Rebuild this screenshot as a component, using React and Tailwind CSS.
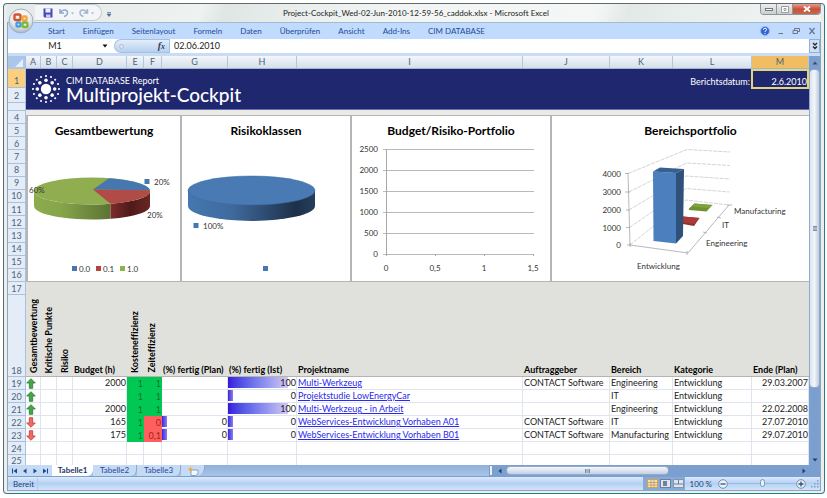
import React from "react";

const TABS = ["Start", "Einfügen", "Seitenlayout", "Formeln", "Daten", "Überprüfen", "Ansicht", "Add-Ins", "CIM DATABASE"];
const COLS = "grid grid-cols-[15px_16px_16px_54px_17px_18px_66px_69px_1fr_87px_63px_79px_57px]";

const PROJECTS = [
  { up: true, budget: "2000", cost: "1", time: "1", plan: "", actual: "100", name: "Multi-Werkzeug", client: "CONTACT Software", area: "Engineering", end: "29.03.2007" },
  { up: true, budget: "", cost: "1", time: "1", plan: "", actual: "0", name: "Projektstudie LowEnergyCar", client: "", area: "IT", end: "" },
  { up: true, budget: "2000", cost: "1", time: "1", plan: "", actual: "100", name: "Multi-Werkzeug - in Arbeit", client: "", area: "Engineering", end: "22.02.2008" },
  { up: false, budget: "165", cost: "1", time: "0", plan: "0", actual: "0", name: "WebServices-Entwicklung Vorhaben A01", client: "CONTACT Software", area: "IT", end: "27.07.2010" },
  { up: false, budget: "175", cost: "1", time: "0,1", plan: "0", actual: "0", name: "WebServices-Entwicklung Vorhaben B01", client: "CONTACT Software", area: "Manufacturing", end: "29.07.2010" },
];

function OfficeButton() {
  return (
    <button aria-label="Office" className="absolute left-1 top-1 z-10 h-[26px] w-[26px]">
      <svg viewBox="0 0 26 26" className="h-full w-full">
        <defs>
          <radialGradient id="orb" cx="50%" cy="30%" r="75%">
            <stop offset="0" stopColor="#ffffff" />
            <stop offset="0.6" stopColor="#e4e8ee" />
            <stop offset="1" stopColor="#9aa7b8" />
          </radialGradient>
        </defs>
        <circle cx="13" cy="13" r="12" fill="url(#orb)" stroke="#a4aebb" />
        <g fill="none" strokeWidth="2.4" strokeLinejoin="round">
          <rect x="6.5" y="6.5" width="6" height="5.5" rx="1.5" stroke="#d9532b" />
          <rect x="14.5" y="8.5" width="4" height="4" rx="1" stroke="#f0a63a" />
          <rect x="8.5" y="14.5" width="4" height="4" rx="1" stroke="#4a9fdb" />
          <rect x="14.5" y="14.5" width="5" height="4.5" rx="1.5" stroke="#7fb63c" />
        </g>
      </svg>
    </button>
  );
}

function TitleBar() {
  return (
    <header className="flex h-[18px] items-start bg-[linear-gradient(115deg,#e3e9e7_0%,#eef2f1_24%,#dfe6e4_27%,#eaefee_36%,#f2f5f4_50%,#f5f7f7_72%,#e2e9e7_76%,#e9efed_84%,#f1f4f3_100%)]">
      <div className="ml-7 flex h-[17px] w-[67px] items-center gap-1 rounded-r-full border border-l-0 border-[#c3cbd0] bg-[#f3f6f8] pl-2">
        <button aria-label="Speichern">
          <svg viewBox="0 0 10 10" className="h-[10px] w-[10px]">
            <path d="M0.5 0.5H9.5V9.5H1.5L0.5 8.5Z" fill="#4a49b8" />
            <rect x="2.5" y="0.5" width="5" height="4" fill="#eef0ff" />
            <rect x="3" y="6.5" width="4.5" height="3" fill="#c7cdf0" />
          </svg>
        </button>
        <button aria-label="Rückgängig" className="ml-[2px]">
          <svg viewBox="0 0 16 10" className="h-[10px] w-4">
            <path d="M1 1V5H5M1.5 4.5C3 1.5 8.5 1 8.5 4.5C8.5 6.500 7 8 5 8.500" fill="none" stroke="#93a7cb" strokeWidth="1.5" />
            <path d="M12 4.500h3l-1.500 1.700z" fill="#a0a8b0" />
          </svg>
        </button>
        <button aria-label="Wiederholen">
          <svg viewBox="0 0 16 10" className="h-[10px] w-4">
            <path d="M8.500 1V5H4.500M8 4.500C6.500 1.500 1 1 1 4.500C1 6.500 2.500 8 4.500 8.500" fill="none" stroke="#a3b4cf" strokeWidth="1.500" />
            <path d="M12 4.500h3l-1.500 1.700z" fill="#a0a8b0" />
          </svg>
        </button>
      </div>
      <button aria-label="Symbolleiste anpassen" className="ml-1 mt-2">
        <svg viewBox="0 0 6 5" className="h-[5px] w-[6px]"><path d="M1 0.500H5M1 2H5L3 4.500Z" stroke="#4d6d96" strokeWidth="0.700" fill="#4d6d96" /></svg>
      </button>
      <h1 className="flex-1 pr-10 pt-[2px] text-center text-[8px] leading-[14px] text-[#222]">
        Project-Cockpit_Wed-02-Jun-2010-12-59-56_caddok.xlsx - Microsoft Excel
      </h1>
      <div className="flex h-[11px] overflow-hidden rounded-b border border-t-0 border-[#8e9799]">
        <button aria-label="Minimieren" className="flex w-4 items-center justify-center border-r border-[#8e9799] bg-gradient-to-b from-[#eceeee] to-[#c9cfcf]">
          <span className="h-[3px] w-2 border border-[#777] bg-white" />
        </button>
        <button aria-label="Maximieren" className="flex w-4 items-center justify-center border-r border-[#8e9799] bg-gradient-to-b from-[#eceeee] to-[#c9cfcf]">
          <svg viewBox="0 0 8 7" className="h-[7px] w-2"><path d="M0.500 0.500H7.500V6.500H0.500ZM3 2.500H5V4.500H3Z" fill="#fff" stroke="#888" strokeWidth="0.800" /></svg>
        </button>
        <button aria-label="Schließen" className="flex w-[27px] items-center justify-center bg-gradient-to-b from-[#e0a091] via-[#c8503a] to-[#c9654c]">
          <svg viewBox="0 0 8 6" className="h-[6px] w-2"><path d="M1 0.500L7 5.500M7 0.500L1 5.500" stroke="#fff" strokeWidth="1.800" /></svg>
        </button>
      </div>
    </header>
  );
}

function Ribbon() {
  return (
    <nav className="flex h-[17px] items-center border-t border-[#a3b9cf] bg-[#c0dbfd] pl-10 text-[8px] text-[#1f4a97]">
      <div className="flex flex-1 gap-[18px]">
        {TABS.map((t) => <button key={t}>{t}</button>)}
      </div>
      <div className="flex items-center gap-2 pr-1">
        <button aria-label="Hilfe">
          <svg viewBox="0 0 10 10" className="h-[10px] w-[10px]">
            <circle cx="5" cy="5" r="4.500" fill="#2f64d4" stroke="#9db9ec" />
            <path d="M3.300 3.800Q3.500 2.200 5 2.200Q6.700 2.300 6.600 3.800Q6.300 4.800 5 5.300V6M5 7V8" stroke="#fff" fill="none" />
          </svg>
        </button>
        <button aria-label="Mappe minimieren"><svg viewBox="0 0 6 8" className="h-2 w-[6px]"><path d="M0.500 6.500H5" stroke="#68758a" strokeWidth="1.200" /></svg></button>
        <button aria-label="Mappe wiederherstellen"><svg viewBox="0 0 8 8" className="h-2 w-2"><path d="M2.500 3V1.500H7.500V4.500H6M1 3.500H5.500V6.500H1Z" fill="none" stroke="#68758a" /></svg></button>
        <button aria-label="Mappe schließen"><svg viewBox="0 0 8 8" className="h-2 w-2"><path d="M1.500 1L6.500 7M6.500 1L1.500 7" stroke="#68758a" strokeWidth="1.200" /></svg></button>
      </div>
    </nav>
  );
}

function FormulaBar() {
  return (
    <div className="flex h-[17px] border-b-[3px] border-[#c9dcf3] bg-white text-[9px] text-[#222]">
      <input aria-label="Namenfeld" defaultValue="M1" className="w-[94px] bg-white text-center outline-none" />
      <button aria-label="Namen" className="flex w-3 items-center">
        <svg viewBox="0 0 6 4" className="h-1 w-[6px]"><path d="M0.500 0.500H5.500L3 3.500Z" fill="#111" /></svg>
      </button>
      <div className="flex w-[55px] items-center justify-between rounded-l-full border border-r-0 border-[#a9c0dd] bg-gradient-to-b from-[#e3eefb] to-[#b7d0ef] px-1">
        <span className="h-[5px] w-[5px] rounded-full border border-[#b3bfce] bg-[#dde5ee]" />
        <button aria-label="Funktion einfügen" className="font-['Liberation_Serif',serif] text-[10px] font-bold italic leading-none text-[#33415c]">f<span className="text-[8px]">x</span></button>
      </div>
      <input aria-label="Bearbeitungsleiste" defaultValue="02.06.2010" className="min-w-0 flex-1 border-l border-[#a9c0dd] pl-1 outline-none" />
      <button aria-label="Bearbeitungsleiste erweitern" className="flex w-[11px] items-center justify-center border border-[#8fb0d8] bg-[#cfe0f5]">
        <svg viewBox="0 0 6 8" className="h-2 w-[6px]"><path d="M1 1L3 3L5 1M1 4.500L3 6.500L5 4.500" fill="none" stroke="#222" strokeWidth="1.300" /></svg>
      </button>
    </div>
  );
}

function RowHeaders() {
  const base = "flex items-center justify-center border-b border-[#a9c1dd]";
  return (
    <div className="flex w-[18px] flex-col border-r border-[#a9c1dd] bg-[#e3ecf7] text-[9px] leading-none text-[#4c6478]">
      <button aria-label="Alles markieren" className="flex h-[13px] items-end justify-end bg-[#abc6e8] p-[2px]">
        <svg viewBox="0 0 8 8" className="h-2 w-2"><path d="M8 0V8H0Z" fill="#e6eef9" /></svg>
      </button>
      <div className={base + " h-[19px] bg-[#fbcf7d] pt-1"}>1</div>
      <div className={base + " h-[15px]"}>2</div>
      <div className={base + " h-2"} />
      <div className={base + " h-[13px]"}>4</div>
      <div className="grid h-[158px] grid-rows-12">
        {[5, 6, 7, 8, 9, 10, 11, 12, 13, 14, 15, 16].map((n) => <div key={n} className={base}>{n}</div>)}
      </div>
      <div className={base + " h-[13px]"}>17</div>
      <div className="flex h-[82px] items-end justify-center border-b border-[#a9c1dd] pb-[1px]">18</div>
      {[19, 20, 21, 22, 23, 24].map((n) => <div key={n} className={base + " h-[13px]"}>{n}</div>)}
      <div className="flex h-[10px] items-center justify-center">25</div>
    </div>
  );
}

function Logo() {
  const ring = (count, radius, size) =>
    Array.from({ length: count }, (_, i) => {
      const a = (i * 2 * Math.PI) / count;
      return <circle key={count + "-" + i} cx={15 + radius * Math.cos(a)} cy={15 + radius * Math.sin(a)} r={size} />;
    });
  return (
    <svg viewBox="0 0 30 30" className="h-[30px] w-[30px] fill-white">
      <circle cx="15" cy="15" r="5.200" />
      {ring(8, 8.7, 1.8)}
      {ring(16, 13, 1.05)}
    </svg>
  );
}

function Banner() {
  return (
    <div className="flex h-[41px] border-b border-[#6b6fb0] bg-[#1f286f] text-white">
      <div className="ml-[5px] mt-[5px]"><Logo /></div>
      <div className="ml-[5px] flex-1 pt-[6px]">
        <div className="text-[9px] leading-[11px]">CIM DATABASE Report</div>
        <div className="text-[19px] font-medium leading-[18px]">Multiprojekt-Cockpit</div>
      </div>
      <div className="pr-[1px] pt-[7px] text-[9px] leading-[11px]">Berichtsdatum:</div>
      <div className="h-[20px] w-[58px] border-2 border-[#e3d57c] pt-[5px] text-right text-[9px] leading-[11px]">2.6.2010</div>
    </div>
  );
}

function Panel({ title, className, titleClass = "", children }) {
  return (
    <section className={"border-y border-l-2 border-[#b5b5b5] bg-white pt-[7px] " + className}>
      <h2 className={"text-center text-[12px] font-bold leading-4 text-black " + titleClass}>{title}</h2>
      {children}
    </section>
  );
}

function RatingChart() {
  return (
    <svg viewBox="28 139 153 142" className="mx-auto h-[142px] w-[153px] text-[8px]" fill="#333">
      <defs>
        <linearGradient id="g1"><stop offset="0" stopColor="#8dac4e" /><stop offset="0.350" stopColor="#86a54a" /><stop offset="1" stopColor="#5c7333" /></linearGradient>
        <linearGradient id="g2"><stop offset="0" stopColor="#7c2d2c" /><stop offset="0.500" stopColor="#4f1a1a" /><stop offset="1" stopColor="#6b2525" /></linearGradient>
      </defs>
      <path d="M34 191A58 13.500 0 0 0 110.500 203.800V218.800A58 13.500 0 0 1 34 206Z" fill="url(#g1)" />
      <path d="M110.500 203.800A58 13.500 0 0 0 150 191V205A58 13.500 0 0 1 110.500 218.800Z" fill="url(#g2)" />
      <ellipse cx="92" cy="191" rx="58" ry="13.500" fill="#90ae50" />
      <path d="M93 189.500L109 178.200A58 13.500 0 0 1 150 190.300Z" fill="#4677b0" />
      <path d="M93 189.500L150 190.300A58 13.500 0 0 1 110.500 203.800Z" fill="#b04b48" />
      <text x="29" y="193">60%</text>
      <rect x="144.500" y="179" width="5" height="5" fill="#4677b0" />
      <text x="154" y="185">20%</text>
      <text x="147" y="218">20%</text>
      <rect x="72" y="266" width="5" height="5" fill="#4677b0" /><text x="79" y="272">0.0</text>
      <rect x="96" y="266" width="5" height="5" fill="#b8403e" /><text x="103" y="272">0.1</text>
      <rect x="120" y="266" width="5" height="5" fill="#8fb04a" /><text x="127" y="272">1.0</text>
    </svg>
  );
}

function RiskChart() {
  return (
    <svg viewBox="183 139 167 142" className="mx-auto h-[142px] w-[167px] text-[8px]" fill="#333">
      <defs>
        <linearGradient id="b1"><stop offset="0" stopColor="#4677b0" /><stop offset="0.350" stopColor="#3f6a9d" /><stop offset="0.850" stopColor="#1d3048" /><stop offset="1" stopColor="#263e5c" /></linearGradient>
      </defs>
      <path d="M188 190.500V206A63.500 15 0 0 0 315 206V190.500Z" fill="url(#b1)" />
      <ellipse cx="251.500" cy="190.500" rx="63.500" ry="14.500" fill="#4a7ab3" stroke="#3b6aa5" strokeWidth="0.500" />
      <rect x="193.500" y="223" width="5" height="5" fill="#4677b0" />
      <text x="203" y="229">100%</text>
      <rect x="263" y="266" width="5" height="5" fill="#4677b0" />
    </svg>
  );
}

function BudgetChart() {
  const rows = [["2500", 149], ["2000", 170], ["1500", 191], ["1000", 212], ["500", 233], ["0", 254]];
  const ticks = [["0", 386], ["0,5", 435], ["1", 484], ["1,5", 533]];
  return (
    <svg viewBox="352 139 198 142" className="mx-auto h-[142px] w-[198px] text-[8px]" fill="#333">
      {rows.map(([label, y]) => (
        <g key={label}>
          <path d={`M383 ${y + 0.5}H534`} stroke="#b9b9b9" />
          <text x="378" y={y + 3} textAnchor="end">{label}</text>
        </g>
      ))}
      <path d="M386.500 149.500V256M435.500 254V256M484.500 254V256M533.500 254V256" stroke="#a8a8a8" />
      {ticks.map(([label, x]) => <text key={label} x={x} y="271" textAnchor="middle">{label}</text>)}
    </svg>
  );
}

function AreaChart() {
  const ys = [["4000", 173.5], ["3000", 191.5], ["2000", 210], ["1000", 227.5], ["0", 245]];
  return (
    <svg viewBox="552 139 277 142" className="h-[142px] w-[277px] max-w-none text-[8px]" fill="#333">
      <g fill="none" stroke="#c9c9c9" strokeWidth="0.800">
        <path d="M628 173.500L687 149.500L730 152M629 192L686.500 163L730 165.500M629 210L686 176L730 179M629.500 227.500L686 188.500L729.500 192M630 245L686 200L729 205" strokeDasharray="4 1" />
        <path d="M628 173.500L630 245L688 253L729 205M625 173.500H629M625 192H630M626 210H630M626 227.500H630M627 245H631M630 243V247M687 251V255M703 232L707 233M717 217L721 218M727 205H732" stroke="#a6a6a6" />
      </g>
      <path d="M683 216.500L699.500 218L694 226L683 224Z" fill="#8f2f2e" />
      <path d="M683 216.500L699.500 218L694 224L683 222.500Z" fill="#a93a38" />
      <path d="M689 208.500L694.500 203.500L712.500 205L706.500 211.500L689 210Z" fill="#6f9132" />
      <path d="M691 206.500L694.500 203.500L712.500 205L708.500 208Z" fill="#7fa33c" />
      <path d="M653 171.500L676 173V243.500L653.500 241Z" fill="#4b7fbe" />
      <path d="M653 171.500L660 167.500L684 169L676 173Z" fill="#375f90" />
      <path d="M676 173L684 169L683 236L676 243.500Z" fill="#2f5078" />
      {ys.map(([label, y]) => <text key={label} x="621" y={y + 3} textAnchor="end">{label}</text>)}
      <text x="734" y="214">Manufacturing</text>
      <text x="722" y="228">IT</text>
      <text x="706" y="246">Engineering</text>
      <text x="637" y="269">Entwicklung</text>
    </svg>
  );
}

function Arrow({ up }) {
  return (
    <svg viewBox="0 0 10 11" role="img" aria-label={up ? "gut" : "schlecht"} className={up ? "h-[11px] w-[10px]" : "h-[11px] w-[10px] rotate-180"}>
      <path d="M5 0.700L9.300 5H6.700V10.300H3.300V5H0.700Z" fill={up ? "#43a648" : "#f06a62"} stroke={up ? "#2b7c33" : "#c03b36"} strokeWidth="0.800" />
    </svg>
  );
}

function BarCell({ value }) {
  return (
    <td className="border-b border-r border-[#dfe4ee] p-0">
      <div className="grid h-3">
        {value !== "" && (
          <div className={"col-start-1 row-start-1 h-[11px] bg-gradient-to-r " + (value === "100" ? "w-[60px] from-[#3a14dc] to-[#d5c8f5]" : "w-[5px] from-[#3f1be0] to-[#8f7bea]")} />
        )}
        <div className="col-start-1 row-start-1 text-right leading-3">{value}</div>
      </div>
    </td>
  );
}

function ProjectTable() {
  const cell = "h-[13px] border-b border-r border-[#dfe4ee] p-0 leading-3 whitespace-nowrap ";
  const head = "overflow-visible border-b border-[#b4b5b1] p-0 pl-[1px] text-left align-bottom font-bold whitespace-nowrap leading-3 ";
  const vertical = "inline-block rotate-180 whitespace-nowrap text-left leading-[13px] [writing-mode:vertical-rl]";
  return (
    <table className="w-full table-fixed border-separate border-spacing-0 text-[9px] text-[#222]">
      <colgroup>
        <col className="w-[15px]" /><col className="w-4" /><col className="w-4" /><col className="w-[54px]" />
        <col className="w-[17px]" /><col className="w-[18px]" /><col className="w-[66px]" /><col className="w-[69px]" />
        <col /><col className="w-[87px]" /><col className="w-[63px]" /><col className="w-[79px]" /><col className="w-[57px]" />
      </colgroup>
      <thead>
        <tr className="h-[95px] bg-[#e0e1dc] text-black">
          <th className={head}><span className={vertical}>Gesamtbewertung</span></th>
          <th className={head}><span className={vertical}>Kritische Punkte</span></th>
          <th className={head}><span className={vertical}>Risiko</span></th>
          <th className={head}>Budget (h)</th>
          <th className={head}><span className={vertical}>Kosteneffizienz</span></th>
          <th className={head}><span className={vertical}>Zeiteffizienz</span></th>
          <th className={head}>(%) fertig (Plan)</th>
          <th className={head}>(%) fertig (Ist)</th>
          <th className={head}>Projektname</th>
          <th className={head}>Auftraggeber</th>
          <th className={head}>Bereich</th>
          <th className={head}>Kategorie</th>
          <th className={head}>Ende (Plan)</th>
        </tr>
      </thead>
      <tbody>
        {PROJECTS.map((p) => (
          <tr key={p.name}>
            <td className={cell}><Arrow up={p.up} /></td>
            <td className={cell} />
            <td className={cell} />
            <td className={cell + "text-right"}>{p.budget}</td>
            <td className="bg-[#00c853] p-0 pr-[1px] text-right leading-3 text-[#15702f]">{p.cost}</td>
            <td className={"p-0 pr-[1px] text-right leading-3 " + (p.time === "1" ? "bg-[#00c853] text-[#15702f]" : "bg-[#ff5f5f] text-[#a51f1f]")}>{p.time}</td>
            <BarCell value={p.plan} />
            <BarCell value={p.actual} />
            <td className={cell + "pl-[1px]"}><a href="#projekt" className="text-[#2a2aee] underline">{p.name}</a></td>
            <td className={cell + "pl-[1px]"}>{p.client}</td>
            <td className={cell + "pl-[1px]"}>{p.area}</td>
            <td className={cell + "pl-[1px]"}>Entwicklung</td>
            <td className={cell + "text-right"}>{p.end}</td>
          </tr>
        ))}
        <tr>{Array.from({ length: 13 }, (_, i) => <td key={i} className={cell} />)}</tr>
        <tr>{Array.from({ length: 13 }, (_, i) => <td key={i} className="h-[10px] border-r border-[#dfe4ee] p-0" />)}</tr>
      </tbody>
    </table>
  );
}

function VerticalScroll() {
  return (
    <div className="flex w-[11px] flex-col bg-[#7b9fce]">
      <button aria-label="Nach oben" className="flex h-[13px] items-center justify-center bg-[#7d9fcd]"><svg viewBox="0 0 6 4" className="h-1 w-[6px]"><path d="M0.500 3.500H5.500L3 0.500Z" fill="#35506f" /></svg></button>
      <div className="flex h-[319px] items-center justify-center rounded-sm border border-[#93a9c6] bg-gradient-to-r from-[#dbe4f0] via-[#f2f5fa] to-[#bccbe0]">
        <span className="h-[5px] w-1 border-y border-[#7e8ea5] bg-[#aab6c8]" />
      </div>
      <div className="flex-1" />
      <button aria-label="Nach unten" className="flex h-[11px] items-center justify-center"><svg viewBox="0 0 6 4" className="h-1 w-[6px]"><path d="M0.500 0.500H5.500L3 3.500Z" fill="#1f3f6c" /></svg></button>
    </div>
  );
}

function NavArrow({ label, d }) {
  return <button aria-label={label}><svg viewBox="0 0 6 6" className="h-[6px] w-[6px]"><path d={d} fill="#1d4a94" /></svg></button>;
}

function SheetTabs() {
  return (
    <div className="flex h-[11px] items-stretch bg-gradient-to-b from-[#8fb0da] to-[#a9c4e6] text-[8px] leading-[11px] text-[#1f4a97]">
      <div className="flex w-[44px] items-center gap-1 bg-[#c5dbf5] pl-1">
        <NavArrow label="Erstes Blatt" d="M0 0.500H1V5.500H0ZM5 0.500V5.500L1.500 3Z" />
        <NavArrow label="Vorheriges Blatt" d="M4.500 0.500V5.500L1 3Z" />
        <NavArrow label="Nächstes Blatt" d="M1.500 0.500V5.500L5 3Z" />
        <NavArrow label="Letztes Blatt" d="M5 0.500H6V5.500H5ZM1 0.500V5.500L4.500 3Z" />
      </div>
      <button className="w-[41px] rounded-br-md bg-white font-bold text-[#1a3566]">Tabelle1</button>
      <button className="w-[44px] rounded-br-md border-r border-[#8aa9d2] bg-[#c5dbf5]">Tabelle2</button>
      <button className="w-[44px] rounded-br-md border-r border-[#8aa9d2] bg-[#c5dbf5]">Tabelle3</button>
      <button aria-label="Tabellenblatt einfügen" className="flex w-6 items-center justify-center rounded-br-lg border-r border-[#8aa9d2] bg-[#c5dbf5]">
        <svg viewBox="0 0 12 10" className="h-[10px] w-3">
          <path d="M4 4H11V8L8.500 9.500H4Z" fill="#f5f9ff" stroke="#6d8fc0" strokeWidth="0.800" />
          <path d="M3.500 0.500L4.500 2.500L6.500 3.300L4.500 4.300L3.500 6.500L2.500 4.300L0.500 3.300L2.500 2.500Z" fill="#f0ad32" />
        </svg>
      </button>
      <div className="flex-1" />
      <span className="w-1 border border-[#7c9bc5] bg-[#eaf1fa]" />
      <div className="flex w-[327px] items-center bg-[#7b9fce]">
        <button aria-label="Nach links" className="flex w-[13px] justify-center"><svg viewBox="0 0 4 6" className="h-[6px] w-1"><path d="M3.500 0.500V5.500L0.500 3Z" fill="#1f3f6c" /></svg></button>
        <div className="flex h-[9px] w-[163px] items-center justify-center rounded-sm border border-[#93a9c6] bg-gradient-to-b from-[#f5f8fc] to-[#c3d0e3]"><span className="h-1 w-[5px] border-x border-[#7e8ea5] bg-[#aab6c8]" /></div>
        <div className="flex-1" />
        <button aria-label="Nach rechts" className="mr-3 flex w-2 justify-center"><svg viewBox="0 0 4 6" className="h-[6px] w-1"><path d="M0.500 0.500V5.500L3.500 3Z" fill="#1f3f6c" /></svg></button>
      </div>
    </div>
  );
}

function StatusBar() {
  return (
    <footer className="flex h-[14px] items-center border-t border-[#7ba0d0] bg-gradient-to-b from-[#dceafb] via-[#b4d0f3] to-[#d3e4fa] pl-[5px] text-[8px] text-[#1f3f7c]">
      <span className="w-[25px] border-r border-[#b5cbe8]">Bereit</span>
      <div className="flex-1" />
      <div className="flex h-full items-center gap-[2px] bg-[#86aadb] pl-1 pr-[1px]">
        <button aria-label="Normal" className="h-[9px] w-[11px] border border-[#d9a04c] bg-[#fbe3a8]"><svg viewBox="0 0 9 7" className="h-full w-full"><path d="M0 2.500H9M0 5H9M3 0V7M6 0V7" stroke="#b09a78" strokeWidth="0.800" /></svg></button>
        <button aria-label="Seitenlayout" className="h-[9px] w-[11px] border border-[#6c7f9c] bg-[#dde5ef] p-[1px]"><span className="mx-auto block h-[5px] w-1 bg-[#70809a]" /></button>
        <button aria-label="Umbruchvorschau" className="h-[9px] w-[11px] border border-[#8394ad] bg-[#dde5ef]"><svg viewBox="0 0 9 7" className="h-full w-full"><path d="M0 4H9M4.500 0V4" stroke="#70809a" /></svg></button>
      </div>
      <button className="ml-[5px]">100 %</button>
      <button aria-label="Verkleinern" className="ml-[6px]"><svg viewBox="0 0 10 10" className="h-[10px] w-[10px]"><circle cx="5" cy="5" r="4.300" fill="#eaf1fa" stroke="#5d789f" strokeWidth="0.800" /><path d="M2.500 5H7.500" stroke="#33507c" strokeWidth="1.300" /></svg></button>
      <input type="range" aria-label="Zoom" defaultValue="50" className="h-[10px] w-[68px] appearance-none bg-transparent [&::-webkit-slider-runnable-track]:h-px [&::-webkit-slider-runnable-track]:bg-[#9dbbe2] [&::-webkit-slider-thumb]:-mt-1 [&::-webkit-slider-thumb]:h-2 [&::-webkit-slider-thumb]:w-[5px] [&::-webkit-slider-thumb]:appearance-none [&::-webkit-slider-thumb]:rounded-sm [&::-webkit-slider-thumb]:border [&::-webkit-slider-thumb]:border-[#7d96ba] [&::-webkit-slider-thumb]:bg-[#e6effa]" />
      <button aria-label="Vergrößern"><svg viewBox="0 0 10 10" className="h-[10px] w-[10px]"><circle cx="5" cy="5" r="4.300" fill="#eaf1fa" stroke="#5d789f" strokeWidth="0.800" /><path d="M2.500 5H7.500M5 2.500V7.500" stroke="#33507c" strokeWidth="1.300" /></svg></button>
      <svg viewBox="0 0 8 8" className="ml-1 h-2 w-[10px]" fill="#7f9fca"><path d="M6 0h1.500v1.500h-1.500zM6 3h1.500v1.500h-1.500zM3 3h1.500v1.500h-1.500zM6 6h1.500v1.500h-1.500zM3 6h1.500v1.500h-1.500zM0 6h1.500v1.500h-1.500z" /></svg>
    </footer>
  );
}

export default function App() {
  return (
    <main className="bg-white p-[3px] pr-[2px] font-[Lato,sans-serif] [font-variant-ligatures:none]">
      <div className="relative overflow-hidden rounded border border-[#5f6a6c] border-b-[#2a7f8e] border-r-[#2a7f8e] bg-[#e8efee] px-[3px] pb-[2px]">
        <OfficeButton />
        <TitleBar />
        <div className="border border-t-0 border-[#8fa5b5]">
          <Ribbon />
          <FormulaBar />
          <div className="flex">
            <RowHeaders />
            <div className="min-w-0 flex-1 overflow-hidden bg-white">
              <div className={COLS + " h-[13px] border-b border-[#9eb6ce] bg-gradient-to-b from-[#f3f7fb] to-[#d5deea] text-center text-[9px] leading-3 text-[#4c6478]"}>
                {"ABCDEFGHIJKLM".split("").map((c) => (
                  <div key={c} className={"border-r border-[#b3c7de] " + (c === "M" ? "bg-[#f0bd62]" : "")}>{c}</div>
                ))}
              </div>
              <Banner />
              <div className="flex h-[172px] bg-[#eaeae6] pt-[5px]">
                <Panel title="Gesamtbewertung" className="w-[154px]"><RatingChart /></Panel>
                <Panel title="Risikoklassen" className="w-[170px]"><RiskChart /></Panel>
                <Panel title="Budget/Risiko-Portfolio" className="w-[200px]"><BudgetChart /></Panel>
                <Panel title="Bereichsportfolio" titleClass="pl-5" className="min-w-0 flex-1 overflow-hidden"><AreaChart /></Panel>
              </div>
              <ProjectTable />
            </div>
            <VerticalScroll />
          </div>
          <SheetTabs />
          <StatusBar />
        </div>
      </div>
    </main>
  );
}
